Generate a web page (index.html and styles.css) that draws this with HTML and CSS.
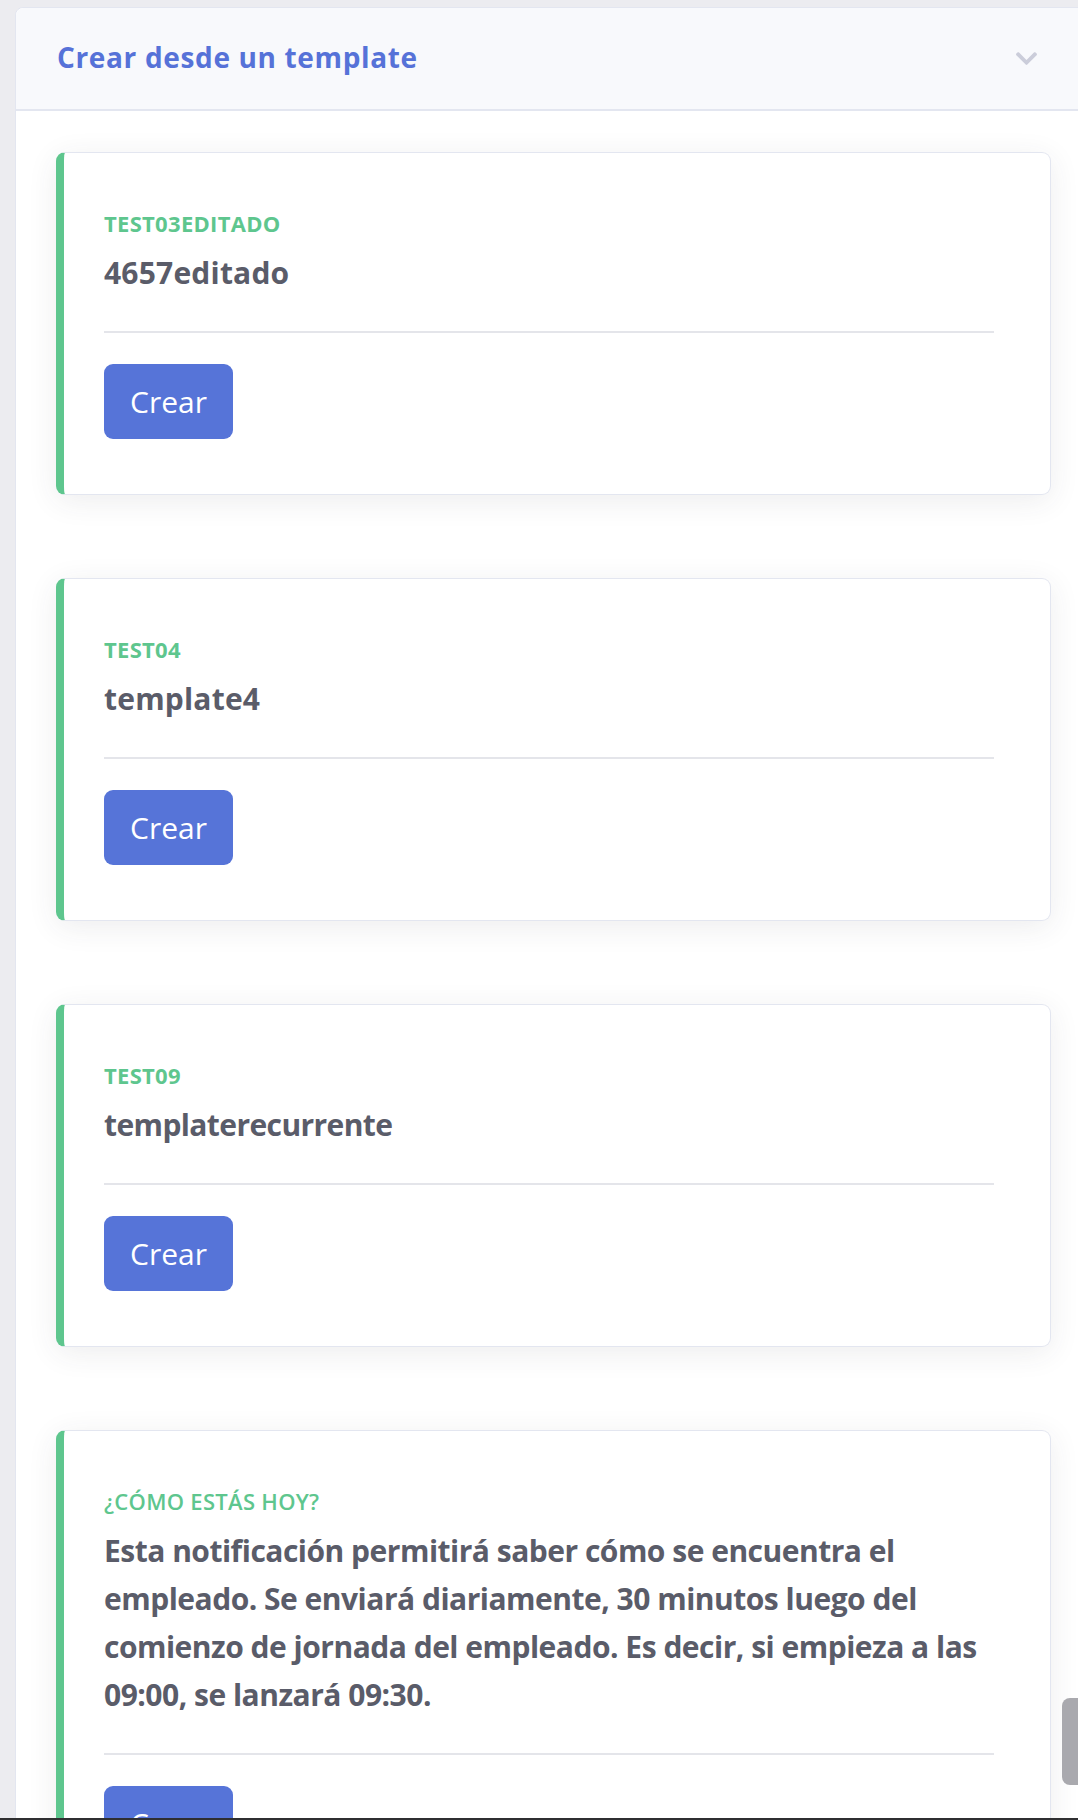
FILE: index.html
```html
<!DOCTYPE html>
<html lang="es">
<head>
<meta charset="utf-8">
<title>Crear desde un template</title>
<link rel="stylesheet" href="styles.css">
</head>
<body>
<div class="page">
  <section class="panel">
    <header class="panel-header">
      <h6 class="panel-title">Crear desde un template</h6>
      <svg class="chevron" viewBox="5 120 438 270" width="21" height="13" aria-hidden="true">
        <path fill="currentColor" d="M207.029 381.476L12.686 187.132c-9.373-9.373-9.373-24.569 0-33.941l22.667-22.667c9.357-9.357 24.522-9.375 33.901-.04L224 284.505l154.745-154.021c9.379-9.335 24.544-9.317 33.901.04l22.667 22.667c9.373 9.373 9.373 24.569 0 33.941L240.971 381.476c-9.373 9.372-24.569 9.372-33.942 0z"/>
      </svg>
    </header>
    <div class="panel-body">
      <article class="card">
        <div class="card-sub">TEST03EDITADO</div>
        <div class="card-title">4657editado</div>
        <hr class="divider">
        <button class="btn">Crear</button>
      </article>
      <article class="card">
        <div class="card-sub">TEST04</div>
        <div class="card-title">template4</div>
        <hr class="divider">
        <button class="btn">Crear</button>
      </article>
      <article class="card">
        <div class="card-sub">TEST09</div>
        <div class="card-title card-title-tight">templaterecurrente</div>
        <hr class="divider">
        <button class="btn">Crear</button>
      </article>
      <article class="card">
        <div class="card-sub card-sub-light">¿Cómo estás hoy?</div>
        <div class="card-title card-desc">Esta notificación permitirá saber cómo se encuentra el empleado. Se enviará diariamente, 30 minutos luego del comienzo de jornada del empleado. Es decir, si empieza a las 09:00, se lanzará 09:30.</div>
        <hr class="divider">
        <button class="btn">Crear</button>
      </article>
    </div>
  </section>
</div>
<div class="scroll-thumb"></div>
<div class="window-edge"></div>
</body>
</html>
```

FILE: styles.css
```css
html, body {
  margin: 0;
  padding: 0;
}

body {
  height: 1820px;
  overflow: hidden;
  background: #ececf0;
  font-family: "Open Sans", "Noto Sans", sans-serif;
  color: #5a5c69;
}

.page {
  padding: 7px 0 0 15px;
}

.panel {
  width: 1075px;
  background: #ffffff;
  border: 1px solid #e3e6f0;
  border-radius: 8px 8px 0 0;
}

.panel-header {
  box-sizing: border-box;
  height: 103px;
  background: #f8f9fc;
  border-bottom: 2px solid #e3e6f0;
  border-radius: 8px 8px 0 0;
  display: flex;
  align-items: center;
  justify-content: space-between;
  padding: 0 54px 4px 41px;
}

.panel-title {
  margin: 0;
  font-size: 28px;
  font-weight: 700;
  letter-spacing: 0.65px;
  color: #5672d8;
}

.chevron {
  color: #cbcdda;
  display: block;
  margin-top: 3px;
}

.panel-body {
  padding: 41px 40px 0 40px;
  display: flex;
  flex-direction: column;
  gap: 83px;
}

.card {
  background: #ffffff;
  border: 1px solid #e3e6f0;
  border-left: 8px solid #5ec68e;
  border-radius: 9px;
  box-shadow: 0 6px 30px rgba(58, 59, 69, 0.09);
  padding: 57px 56px 55px 40px;
}

.card-sub {
  font-size: 22px;
  line-height: 26px;
  font-weight: 700;
  letter-spacing: 0.3px;
  text-transform: uppercase;
  color: #5ec68e;
}

.card-sub-light {
  font-weight: 600;
  letter-spacing: 0.3px;
}

.card-title {
  margin-top: 13px;
  font-size: 30px;
  line-height: 48px;
  font-weight: 700;
  letter-spacing: 0.2px;
  color: #5a5c69;
}

.card-title-tight {
  letter-spacing: -0.6px;
}

.card-desc {
  letter-spacing: -0.5px;
}

.divider {
  margin: 34px 0 0 0;
  border: 0;
  border-top: 2px solid #e4e5ea;
  height: 0;
}

.btn {
  display: block;
  margin-top: 31px;
  height: 75px;
  padding: 0 26px;
  border: 0;
  border-radius: 9px;
  background: #5674d8;
  color: #ffffff;
  font-family: "Open Sans", "Noto Sans", sans-serif;
  font-size: 30px;
  font-weight: 400;
  line-height: 75px;
}

.scroll-thumb {
  position: fixed;
  right: 0;
  top: 1698px;
  width: 16px;
  height: 87px;
  background: #a9a9ae;
  border-radius: 8px 0 0 8px;
}

.window-edge {
  position: fixed;
  left: 0;
  right: 0;
  bottom: 0;
  height: 2px;
  background: #2f2f31;
}
```
